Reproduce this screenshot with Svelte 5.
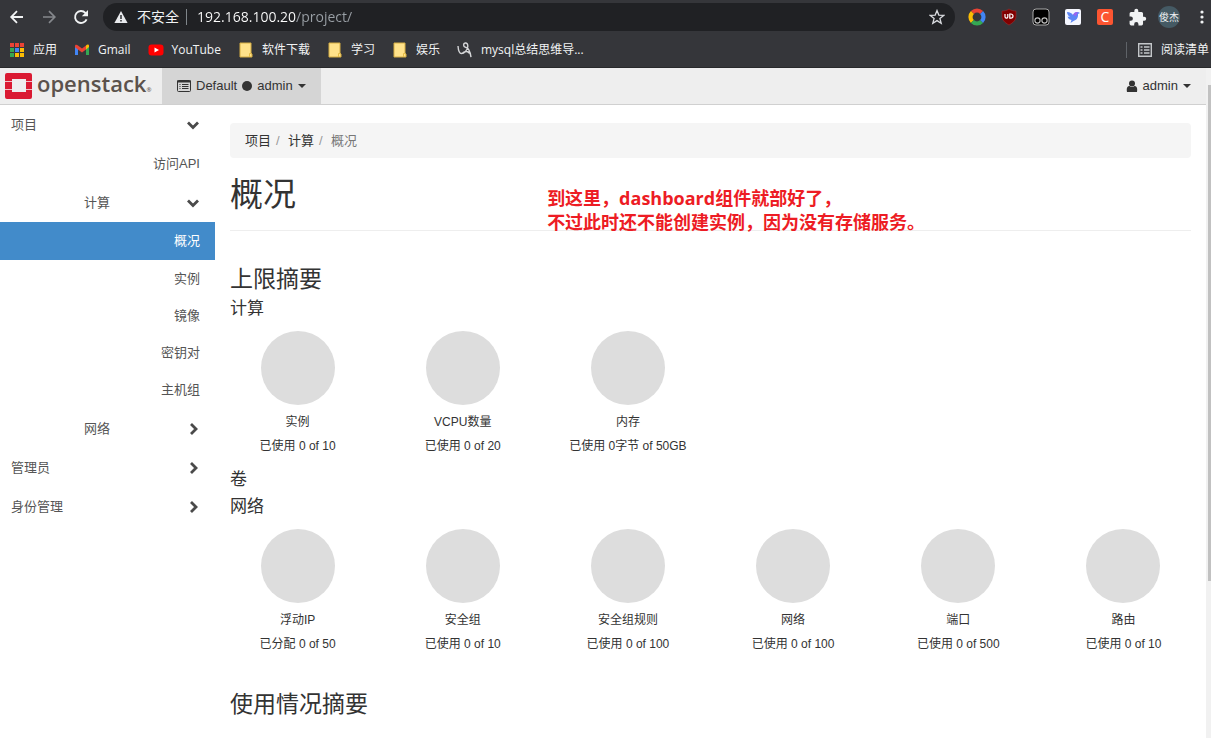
<script>
  const bookmarks = [
    { icon: 'apps', label: '应用' },
    { icon: 'gmail', label: 'Gmail' },
    { icon: 'youtube', label: 'YouTube' },
    { icon: 'folder', label: '软件下载' },
    { icon: 'folder', label: '学习' },
    { icon: 'folder', label: '娱乐' },
    { icon: 'mind', label: 'mysql总结思维导...' }
  ];
  const computeLinks = ['概况', '实例', '镜像', '密钥对', '主机组'];
  const computeQuotas = [
    { name: '实例', usage: '已使用 0 of 10' },
    { name: 'VCPU数量', usage: '已使用 0 of 20' },
    { name: '内存', usage: '已使用 0字节 of 50GB' }
  ];
  const networkQuotas = [
    { name: '浮动IP', usage: '已分配 0 of 50' },
    { name: '安全组', usage: '已使用 0 of 10' },
    { name: '安全组规则', usage: '已使用 0 of 100' },
    { name: '网络', usage: '已使用 0 of 100' },
    { name: '端口', usage: '已使用 0 of 500' },
    { name: '路由', usage: '已使用 0 of 10' }
  ];
  const appColors = ['#ea4335', '#ea4335', '#ea4335', '#34a853', '#4285f4', '#fbbc04', '#34a853', '#fbbc04', '#fbbc04'];
  let address = $state('192.168.100.20/project/');
</script>

{#snippet chevron(open)}
  <svg class="chevron" viewBox="0 0 14 14" width="14" height="14" aria-hidden="true">
    <path d={open ? 'M2 4.5 7 9.5 12 4.5' : 'M5 2 10 7 5 12'} fill="none" stroke="#4a4a4a" stroke-width="2.8" />
  </svg>
{/snippet}

{#snippet quotaRow(items)}
  <div class="quotas">
    {#each items as item}
      <div class="quota">
        <div class="pie"></div>
        <div class="quota-name">{item.name}</div>
        <div class="quota-usage">{item.usage}</div>
      </div>
    {/each}
  </div>
{/snippet}

<div class="window">
  <div class="browser">
    <div class="toolbar">
      <button class="tool" aria-label="Back">
        <svg viewBox="0 0 16 16" width="16" height="16"><path d="M14 8H2.5M8 2.2 2.2 8 8 13.8" fill="none" stroke="#f1f3f4" stroke-width="1.8" /></svg>
      </button>
      <button class="tool" aria-label="Forward">
        <svg viewBox="0 0 16 16" width="16" height="16"><path d="M2 8h11.5M8 2.2 13.8 8 8 13.8" fill="none" stroke="#85888c" stroke-width="1.7" /></svg>
      </button>
      <button class="tool" aria-label="Reload">
        <svg viewBox="0 0 16 16" width="16" height="16"><path d="M13.6 10.3A6 6 0 1 1 12.4 3.8L13.4 5" fill="none" stroke="#f1f3f4" stroke-width="1.9" /><path d="M15 1v6.2H8.8z" fill="#f1f3f4" /></svg>
      </button>
      <div class="omnibox">
        <svg viewBox="0 0 14 14" width="14" height="14" aria-hidden="true"><path d="M7 1 13.6 13H.4z" fill="#e8eaed" /><path d="M7 5v4M7 10v1.6" stroke="#202124" stroke-width="1.4" /></svg>
        <span class="insecure">不安全</span>
        <span class="bar"></span>
        <input class="address" aria-label="Address" bind:value={address} />
        <button class="star" aria-label="Bookmark this page">
          <svg viewBox="0 0 16 16" width="16" height="16"><path d="m8 1.6 1.8 4.5 4.9.3-3.8 3.1 1.3 4.7L8 11.6l-4.2 2.6 1.3-4.7L1.3 6.4l4.9-.3z" fill="none" stroke="#dadce0" stroke-width="1.3" /></svg>
        </button>
      </div>
      <button class="tool" aria-label="Search extension">
        <svg viewBox="0 0 18 18" width="18" height="18" fill="none" stroke-width="4.2"><path d="M4.4 4.4A6.5 6.5 0 0 1 13.6 4.4" stroke="#ea4335" /><path d="M4.4 4.4A6.5 6.5 0 0 0 4.4 13.6" stroke="#fbbc04" /><path d="M4.4 13.6A6.5 6.5 0 0 0 13.6 13.6" stroke="#34a853" /><path d="M13.6 4.4A6.5 6.5 0 0 1 13.6 13.6" stroke="#4285f4" /></svg>
      </button>
      <button class="tool" aria-label="uBlock">
        <svg viewBox="0 0 16 18" width="16" height="18"><path d="M8 1c2 1.5 4.300 2 7 2v5c0 4-2.500 6.500-7 9-4.500-2.500-7-5-7-9V3c2.700 0 5-.5 7-2z" fill="#800000" stroke="#a33" stroke-width=".5" /><path d="M4 6v2.800a1.400 1.400 0 0 0 2.800 0V6M8.800 6v4.200h1.100a2 2 0 0 0 0-4.200z" fill="none" stroke="#fff" stroke-width="1.200" /></svg>
      </button>
      <button class="tool" aria-label="Script manager">
        <svg viewBox="0 0 18 18" width="18" height="18"><rect x="1" y="1" width="16" height="16" rx="3" fill="#000" stroke="#aaa" /><g fill="#000" stroke="#c4c4c4" stroke-width="1.100"><circle cx="5.500" cy="12.500" r="2.600" /><circle cx="12.500" cy="12.500" r="2.600" /></g></svg>
      </button>
      <button class="tool" aria-label="Bird extension">
        <svg viewBox="0 0 18 18" width="18" height="18"><rect x="1" y="1" width="16" height="16" rx="2" fill="#f5f7ff" /><path d="M3 4c3 .2 5 1.200 6 3 1-2.500 3-3.500 5-3l2 1-2 1c.3 4-1.500 6-4.500 7l-3 2 1-3C5 11.500 4 10.500 3.600 8.600L6 9C4 7.800 3.200 6 3 4z" fill="#5b86f5" /><path d="M9 7c1-2.500 3-3.500 5-3l-2 4z" fill="#9a63f0" /></svg>
      </button>
      <button class="tool" aria-label="C extension"><span class="c-badge">C</span></button>
      <button class="tool" aria-label="Extensions">
        <svg viewBox="0 0 24 24" width="19" height="19"><path d="M20.500 11H19V7a2 2 0 0 0-2-2h-4V3.500a2.500 2.500 0 0 0-5 0V5H4a2 2 0 0 0-2 2v3.800h1.500a2.700 2.700 0 0 1 0 5.400H2V20c0 1.100.9 2 2 2h3.800v-1.500a2.700 2.700 0 0 1 5.400 0V22H17a2 2 0 0 0 2-2v-4h1.500a2.500 2.500 0 0 0 0-5z" fill="#f1f3f4" /></svg>
      </button>
      <button class="tool" aria-label="Profile"><span class="avatar">俊杰</span></button>
      <button class="menu" aria-label="Menu">
        <svg viewBox="0 0 4 16" width="4" height="16" fill="#f1f3f4"><circle cx="2" cy="3" r="1.600" /><circle cx="2" cy="8" r="1.600" /><circle cx="2" cy="13" r="1.600" /></svg>
      </button>
    </div>

    <div class="bookmarks">
      {#each bookmarks as mark}
        <a class="bookmark" href="#bookmark">
          <svg viewBox="0 0 16 16" width="16" height="16" aria-hidden="true">
            {#if mark.icon === 'apps'}
              {#each appColors as color, i}
                <rect x={1 + (i % 3) * 5} y={1 + Math.floor(i / 3) * 5} width="4" height="4" fill={color} />
              {/each}
            {:else if mark.icon === 'gmail'}
              <path d="M1 4v9h3V6.500z" fill="#4285f4" /><path d="M12 6.500V13h3V4z" fill="#34a853" /><path d="M12 3.500v4L15 5V4c0-1.600-1.700-2-3-.5z" fill="#fbbc04" /><path d="M1 4v1.200L8 10.500l4-3v-4L8 6.600 4 3.500C2.500 2.200 1 2.700 1 4z" fill="#ea4335" />
            {:else if mark.icon === 'youtube'}
              <rect x="0.500" y="2.500" width="15" height="11" rx="3" fill="#f00" /><path d="M6.500 5.500 11 8 6.500 10.500z" fill="#fff" />
            {:else if mark.icon === 'folder'}
              <path d="M2 1h11v10.500l1 .5v3H2z" fill="#ffe28a" stroke="#d5ad43" /><path d="M11.500 15v-3.500h2" fill="none" stroke="#e5bc46" />
            {:else}
              <path d="M1 4c.3 4.500 1.500 7.500 3.500 7.500 2.500 0 6-3 6.300-7C11 2 9.800.8 8.300 1 6 1.300 6 4.800 8.500 5.200c2.500.2 4.500 3 5.500 10M5 11.500C8 9 11 8.500 12.500 11.500" fill="none" stroke="#d5d6d8" stroke-width="1.400" />
            {/if}
          </svg>
          <span>{mark.label}</span>
        </a>
      {/each}
      <button class="reading">
        <svg viewBox="0 0 16 16" width="16" height="16" aria-hidden="true"><path d="M1.700 1.700h12.600v12.600H1.700zM3.500 5h2M7 5h5.500M3.500 8h2M7 8h5.500M3.500 11h2M7 11h5.500" fill="none" stroke="#c4c7ca" stroke-width="1.400" /></svg>
        <span>阅读清单</span>
      </button>
    </div>
  </div>

  <div class="viewport">
    <div class="page">
      <header>
        <a class="logo" href="#home">
          <svg viewBox="0 0 27 26" width="27" height="26" aria-hidden="true"><path fill-rule="evenodd" d="M2 0h23a2 2 0 0 1 2 2v22a2 2 0 0 1-2 2H2a2 2 0 0 1-2-2V2a2 2 0 0 1 2-2zm5 6v13h14V6z" fill="#da1a32" /><path d="M0 8.500h7M0 16.500h7M21 8.500h6M21 16.500h6" stroke="#f3bfc6" /></svg>
          <span class="wordmark">openstack<small>®</small></span>
        </a>
        <button class="context">
          <svg viewBox="0 0 14 12" width="14" height="12" aria-hidden="true"><rect x=".5" y=".5" width="13" height="11" rx="1" fill="none" stroke="#333" /><path d="M0 1.500h14" stroke="#333" stroke-width="2" /><path d="M2.500 4.500h1M5 4.500h6.500M2.500 6.500h1M5 6.500h6.500M2.500 8.500h1M5 8.500h6.500" stroke="#333" /></svg>
          <span>Default</span><span class="dot"></span><span>admin</span><span class="caret"></span>
        </button>
        <button class="user">
          <svg viewBox="0 0 12 12" width="12" height="12" aria-hidden="true"><circle cx="6" cy="3.500" r="3" fill="#333" /><path d="M1 12c-.8-4 .5-6 2.500-6C5 7.300 7 7.300 8.500 6c2 0 3.300 2 2.500 6z" fill="#333" /></svg>
          <span>admin</span><span class="caret"></span>
        </button>
      </header>

      <div class="body">
        <nav class="sidebar">
          <button class="group"><span>项目</span>{@render chevron(true)}</button>
          <a class="group leaf" href="#api">访问API</a>
          <button class="group nested"><span>计算</span>{@render chevron(true)}</button>
          <div class="panels">
            {#each computeLinks as label, i}
              <a class="panel" class:active={i === 0} href="#panel">{label}</a>
            {/each}
          </div>
          <button class="group nested"><span>网络</span>{@render chevron(false)}</button>
          <button class="group"><span>管理员</span>{@render chevron(false)}</button>
          <button class="group"><span>身份管理</span>{@render chevron(false)}</button>
        </nav>

        <main>
          <div class="breadcrumb">
            <a href="#project">项目</a><i>/</i><a href="#compute">计算</a><i>/</i><span>概况</span>
          </div>
          <div class="title">
            <h1>概况</h1>
            <p class="note">到这里，dashboard组件就部好了，<br />不过此时还不能创建实例，因为没有存储服务。</p>
          </div>
          <h2>上限摘要</h2>
          <h3>计算</h3>
          {@render quotaRow(computeQuotas)}
          <h3>卷</h3>
          <h3>网络</h3>
          {@render quotaRow(networkQuotas)}
          <h2 class="usage-title">使用情况摘要</h2>
        </main>
      </div>
    </div>
    <div class="scrollbar"><div class="thumb"></div></div>
  </div>
</div>

<style>
  :global(body) {
    margin: 0;
    background: #fff;
  }
  .window {
    height: 100vh;
    display: flex;
    flex-direction: column;
    overflow: hidden;
    font: 13px/20px "Liberation Sans", "Noto Sans CJK SC", sans-serif;
    color: #333;
  }
  .window * {
    box-sizing: border-box;
  }
  button {
    border: 0;
    padding: 0;
    background: none;
    font: inherit;
    color: inherit;
  }
  a {
    color: inherit;
    text-decoration: none;
  }
  svg {
    flex: none;
  }

  .browser {
    flex: none;
    background: #35363a;
    border-bottom: 1px solid #28292b;
    color: #f1f3f4;
    font-family: "Open Sans", "Noto Sans CJK SC", sans-serif;
  }
  .toolbar {
    display: flex;
    align-items: center;
    height: 34px;
    padding-left: 1px;
  }
  .tool {
    width: 32px;
    height: 32px;
    flex: none;
    display: flex;
    align-items: center;
    justify-content: center;
  }
  .menu {
    width: 26px;
    padding-left: 8px;
    display: flex;
    justify-content: center;
  }
  .omnibox {
    flex: 1;
    display: flex;
    align-items: center;
    height: 28px;
    margin: 0 6px;
    padding: 0 10px 0 11px;
    border-radius: 14px;
    background: #202124;
    font-size: 14px;
  }
  .insecure {
    margin-left: 9px;
    white-space: nowrap;
  }
  .bar {
    width: 1px;
    height: 16px;
    margin: 0 10px 0 7px;
    background: #80868b;
  }
  .address {
    flex: 1;
    min-width: 0;
    border: 0;
    padding: 0;
    font: 14px/20px "Open Sans", "Noto Sans CJK SC", sans-serif;
    color: transparent;
    background: linear-gradient(90deg, #fff 99px, #9aa0a6 99px);
    background-clip: text;
    -webkit-background-clip: text;
  }
  .star {
    display: flex;
  }
  .c-badge {
    width: 16px;
    height: 16px;
    border-radius: 2px;
    background: #fc5531;
    color: #fff;
    font-size: 14px;
    line-height: 16px;
  }
  .avatar {
    width: 22px;
    height: 22px;
    border-radius: 50%;
    background: #455a64;
    font-size: 10px;
    line-height: 22px;
  }
  .bookmarks {
    display: flex;
    align-items: center;
    gap: 17px;
    height: 33px;
    padding: 0 2px 1px 9px;
    font-size: 12px;
    white-space: nowrap;
  }
  .bookmark {
    display: flex;
    align-items: center;
    gap: 8px;
  }
  .reading {
    display: flex;
    align-items: center;
    gap: 8px;
    height: 16px;
    margin-left: auto;
    padding-left: 10px;
    border-left: 1px solid #5f6368;
  }

  .viewport {
    flex: 1;
    min-height: 0;
    display: flex;
  }
  .page {
    flex: 1;
    min-width: 0;
  }
  .scrollbar {
    width: 5px;
    padding: 17px 0 0 2px;
    background: #f1f1f1;
  }
  .thumb {
    height: 76%;
    background: #c1c1c1;
  }

  header {
    display: flex;
    height: 37px;
    background: #eee;
    border-bottom: 1px solid #d0d0d0;
  }
  .logo {
    display: flex;
    align-items: center;
    gap: 5px;
    width: 162px;
    padding-left: 5px;
    color: #5b524c;
  }
  .wordmark {
    font: 600 22px/32px "Open Sans", sans-serif;
  }
  .wordmark small {
    font-size: 6px;
  }
  .context,
  .user {
    display: flex;
    align-items: center;
    gap: 5px;
  }
  .context {
    padding: 0 15px;
    background: #d5d5d5;
  }
  .user {
    margin-left: auto;
    padding: 0 15px;
  }
  .dot {
    width: 10px;
    height: 10px;
    border-radius: 50%;
    background: #333;
  }
  .caret {
    border: 4px solid transparent;
    border-top-color: #333;
    border-bottom: 0;
  }

  .body {
    display: flex;
  }
  .sidebar {
    width: 215px;
    flex: none;
    color: #555;
  }
  .group {
    display: flex;
    align-items: center;
    justify-content: space-between;
    width: 100%;
    height: 39px;
    padding: 0 15px 0 11px;
  }
  .nested {
    padding-left: 84px;
  }
  .leaf {
    justify-content: flex-end;
  }
  .panels {
    padding-bottom: 1px;
  }
  .panel {
    display: block;
    padding-right: 15px;
    line-height: 37px;
    text-align: right;
  }
  .active {
    line-height: 38px;
    background: #428bca;
    color: #fff;
  }

  main {
    flex: 1;
    min-width: 0;
    padding: 18px 15px 0;
  }
  .breadcrumb {
    display: flex;
    height: 35px;
    padding: 0 15px;
    border-radius: 4px;
    background: #f5f5f5;
    line-height: 35px;
  }
  .breadcrumb i {
    width: 17px;
    padding-left: 5px;
    font-style: normal;
    color: #999;
  }
  .breadcrumb span {
    color: #777;
  }
  .title {
    position: relative;
    padding: 17px 0 15px;
    border-bottom: 1px solid #eee;
  }
  .note {
    position: absolute;
    left: 33%;
    top: 28px;
    margin: 0;
    font: bold 18px/24px "Open Sans", "Noto Sans CJK SC", sans-serif;
    color: #ed1c24;
    white-space: nowrap;
  }
  h1,
  h2,
  h3 {
    margin: 0;
    font-weight: 400;
  }
  h1 {
    font-size: 33px;
    line-height: 40px;
  }
  h2 {
    margin-top: 32px;
    font-size: 23px;
    line-height: 32px;
  }
  .usage-title {
    margin-top: 24px;
  }
  h3 {
    font-size: 17px;
    line-height: 27px;
  }
  .quotas {
    display: grid;
    grid-template-columns: repeat(6, 1fr);
    margin: 0 -15px;
    padding: 9px 0 8px;
    font-size: 12px;
    line-height: 24px;
    text-align: center;
  }
  .pie {
    width: 74px;
    height: 74px;
    margin: 0 auto 5px;
    border-radius: 50%;
    background: #ddd;
  }
</style>
